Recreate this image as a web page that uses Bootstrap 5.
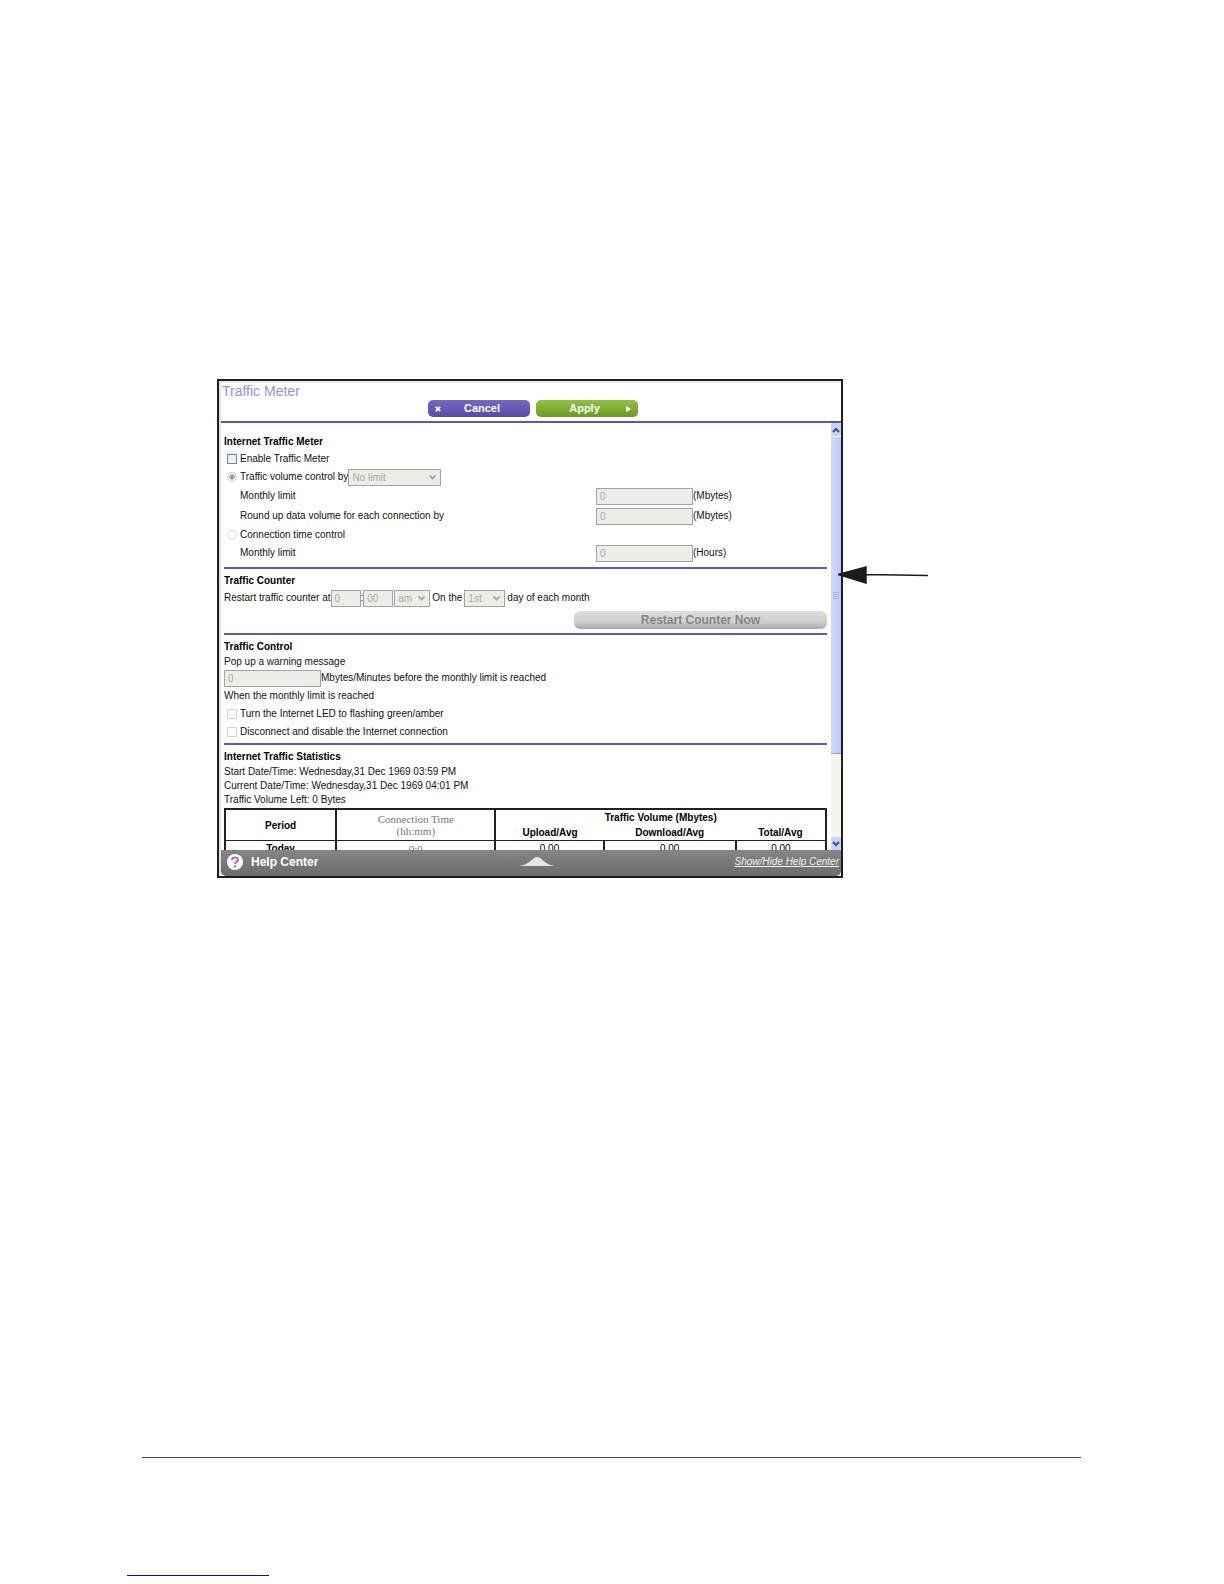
<!DOCTYPE html>
<html lang="en">
<head>
<meta charset="utf-8">
<meta name="viewport" content="width=device-width, initial-scale=1">
<title>Traffic Meter</title>
<link href="https://cdn.jsdelivr.net/npm/bootstrap@5.3.0/dist/css/bootstrap.min.css" rel="stylesheet">
<style>
body{font-family:"Liberation Sans",Arial,sans-serif;font-size:10px;line-height:14px;color:#111;background:#fff}
.page{min-height:1584px;padding-top:379px}
.shot{width:626px;max-width:80%;margin-left:217px}
.frame{border:2px solid #1d1d22}
.inner{border-left:2px solid #e2e2e6;border-top:2px solid #ececec}
.head{height:40px;border-bottom:2px solid #6153b4;padding:0 0 4px 1px}
.title{font-size:14px;line-height:16px;color:#9b8fe0;margin:0;font-weight:400}
.pill{width:102px;height:17px;border:0;border-radius:5px;color:#fff;font-size:11px;line-height:17px;font-weight:700;padding:0 7px}
.pill-cancel{background:linear-gradient(#7568c0,#5a4ba6)}
.pill-apply{background:linear-gradient(#93c146,#699a23)}
.pills{gap:6px;padding-left:3px}
.view{height:427px;overflow:hidden}
.pane{padding:11px 0 0 3px;min-width:0}
.sect{border-top:2px solid #6559b8;padding-top:4px}
.sect-first{padding-bottom:5px}
.sect-control{padding-bottom:2px}
.sect-title{font-size:10px;line-height:16px;font-weight:700;margin:0;color:#000}
.line{min-height:18px}
.line-tall{min-height:20px}
.indent{padding-left:16px}
.amount{width:231px}
.box,.drop{height:17px;border:1px solid #9aa5b1;background-color:#edede7;color:#a9a9a0;font-family:inherit;font-size:10px;line-height:15px;padding:0 3px;border-radius:0;opacity:1}
.box-wide{width:97px}
.box-short{width:30px}
.drop{appearance:none;background-image:url("data:image/svg+xml,%3Csvg xmlns='http://www.w3.org/2000/svg' width='9' height='7'%3E%3Cpath d='M1.500 1.500l3 3 3-3' fill='none' stroke='%23a9ada8' stroke-width='2'/%3E%3C/svg%3E");background-repeat:no-repeat;background-position:right 3px center}
.drop-limit{width:93px}
.drop-half{width:36px;margin:0 2px 0 1px}
.drop-day{width:41px;margin:0 2px}
.tick,.dot{appearance:none;width:10px;height:10px;margin:0 3px 0 3px;border:1px solid #d5d5cf;background:#fff;flex:none}
.tick-on{border-color:#6d8496;background:#eef1f1}
.dot{border-radius:50%}
.dot:checked{background:radial-gradient(circle,#9d9d98 0 2px,#f2f2ee 3px)}
.pill-restart{width:253px;height:18px;border:0;border-radius:6px;background:linear-gradient(#dedede,#cfcfcf 60%,#a9a9a9);color:#858585;font-size:12px;line-height:18px;font-weight:700;padding:0}
.stats{width:100%;table-layout:fixed;border:2px solid #222;border-collapse:collapse;margin-top:1px;text-align:center;color:#000}
.stats th,.stats td{border:1px solid #222;border-left-width:2px;padding:0;line-height:15px}
.stats .bl{border-width:0 0 1px 0}
.stats .left{border-width:0 0 0 2px}
.stats .leftb{border-width:0 0 1px 2px}
.stats .serif{font-family:"Liberation Serif",serif;font-size:11px;line-height:12px;font-weight:400;color:#777}
.bar{width:10px;background:#f4f4f0;flex:none}
.bar-btn{height:13px;background:#c6d3fb;flex:none;border-radius:2px}
.thumb{height:317px;margin-top:1px;background:linear-gradient(90deg,#cfdafd,#bccbfa);border-bottom:1px solid #8e9fd8}
.help{height:26px;background:linear-gradient(#858585,#6c6c6c);border-radius:0 0 5px 5px;color:#fff;padding:0 2px 2px 6px}
.help-name{font-size:12px;font-weight:700}
.help a{font-size:10px;font-style:italic;color:#f2f2f2}
.help-mid{left:51%;bottom:10px;transform:translateX(-50%)}
.pointer{left:calc(100% - 5px);top:187px}
.foot-rule{height:1px;background:#5a3a78;margin:0 143px 117px 142px}
.link-rule{height:1px;width:142px;background:#1b0a8c;margin:0 0 8px 127px}
</style>
</head>
<body>
<div class="page d-flex flex-column">
<main class="shot position-relative">
 <div class="frame"><div class="inner">
  <header class="head d-flex flex-column justify-content-between">
   <h1 class="title">Traffic Meter</h1>
   <div class="pills d-flex justify-content-center">
    <button type="button" class="pill pill-cancel d-flex align-items-center">
     <svg width="6" height="6" viewBox="0 0 6 6" aria-hidden="true"><path d="M.8.8l4.400 4.400M5.200.8L.8 5.200" stroke="#fff" stroke-width="1.800"/></svg><span class="flex-fill">Cancel</span></button>
    <button type="button" class="pill pill-apply d-flex align-items-center"><span class="flex-fill">Apply</span>
     <svg width="5" height="6" viewBox="0 0 5 6" aria-hidden="true"><path d="M0 0l5 3-5 3z" fill="#fff"/></svg></button>
   </div>
  </header>
  <div class="view d-flex">
   <form class="pane flex-fill">
    <section class="sect-first">
     <h2 class="sect-title">Internet Traffic Meter</h2>
     <div class="line d-flex align-items-center"><input class="tick tick-on" type="checkbox" id="enable"><label for="enable">Enable Traffic Meter</label></div>
     <div class="line d-flex align-items-center"><input class="dot" type="radio" name="mode" id="vol" checked disabled><label for="vol">Traffic volume control by</label><select class="drop drop-limit" id="limit" aria-label="Volume control" disabled><option>No limit</option></select></div>
     <div class="line-tall indent d-flex align-items-center justify-content-between"><label for="m1">Monthly limit</label><div class="amount d-flex align-items-center"><input class="box box-wide" id="m1" value="0" disabled><span>(Mbytes)</span></div></div>
     <div class="line-tall indent d-flex align-items-center justify-content-between"><label for="m2">Round up data volume for each connection by</label><div class="amount d-flex align-items-center"><input class="box box-wide" id="m2" value="0" disabled><span>(Mbytes)</span></div></div>
     <div class="line d-flex align-items-center"><input class="dot" type="radio" name="mode" id="time" disabled><label for="time">Connection time control</label></div>
     <div class="line indent d-flex align-items-center justify-content-between"><label for="m3">Monthly limit</label><div class="amount d-flex align-items-center"><input class="box box-wide" id="m3" value="0" disabled><span>(Hours)</span></div></div>
    </section>
    <section class="sect">
     <h2 class="sect-title">Traffic Counter</h2>
     <div class="line d-flex align-items-center"><label for="hh">Restart traffic counter at</label><input class="box box-short" id="hh" value="0" disabled><span>:</span><input class="box box-short" aria-label="Minutes" value="00" disabled><select class="drop drop-half" aria-label="am or pm" disabled><option>am</option></select><label for="day">On the</label><select class="drop drop-day" id="day" disabled><option>1st</option></select><span>day of each month</span></div>
     <div class="d-flex justify-content-end pt-1 pb-1"><button type="button" class="pill-restart" disabled>Restart Counter Now</button></div>
    </section>
    <section class="sect sect-control">
     <h2 class="sect-title">Traffic Control</h2>
     <div>Pop up a warning message</div>
     <div class="line d-flex align-items-center"><input class="box box-wide" id="warn" value="0" disabled><label for="warn">Mbytes/Minutes before the monthly limit is reached</label></div>
     <div class="line d-flex align-items-center">When the monthly limit is reached</div>
     <div class="line d-flex align-items-center"><input class="tick" type="checkbox" id="led" disabled><label for="led">Turn the Internet LED to flashing green/amber</label></div>
     <div class="line d-flex align-items-center"><input class="tick" type="checkbox" id="disc" disabled><label for="disc">Disconnect and disable the Internet connection</label></div>
    </section>
    <section class="sect">
     <h2 class="sect-title">Internet Traffic Statistics</h2>
     <div>Start Date/Time: Wednesday,31 Dec 1969 03:59 PM</div>
     <div>Current Date/Time: Wednesday,31 Dec 1969 04:01 PM</div>
     <div>Traffic Volume Left: 0 Bytes</div>
     <table class="stats">
      <colgroup><col style="width:18.500%"><col style="width:26.500%"><col style="width:18%"><col style="width:22%"><col style="width:15%"></colgroup>
      <thead>
       <tr><th rowspan="2">Period</th><th rowspan="2" class="serif">Connection Time<br>(hh:mm)</th><th colspan="3" class="left">Traffic Volume (Mbytes)</th></tr>
       <tr><th class="leftb">Upload/Avg</th><th class="bl">Download/Avg</th><th class="bl">Total/Avg</th></tr>
      </thead>
      <tbody><tr><th>Today</th><td class="serif">0:0</td><td>0.00</td><td>0.00</td><td>0.00</td></tr></tbody>
     </table>
    </section>
   </form>
   <div class="bar d-flex flex-column ms-1" aria-hidden="true">
    <div class="bar-btn d-flex align-items-center justify-content-center"><svg width="8" height="6" viewBox="0 0 8 6"><path d="M1 5l3-3 3 3" fill="none" stroke="#43557f" stroke-width="2"/></svg></div>
    <div class="thumb d-flex align-items-center justify-content-center"><svg width="6" height="7" viewBox="0 0 6 7"><path d="M0 .5h6M0 2.500h6M0 4.500h6M0 6.500h6" stroke="#a3b5ee"/></svg></div>
    <div class="bar-btn d-flex align-items-center justify-content-center mt-auto"><svg width="8" height="6" viewBox="0 0 8 6"><path d="M1 1l3 3 3-3" fill="none" stroke="#43557f" stroke-width="2"/></svg></div>
   </div>
  </div>
  <footer class="help d-flex align-items-center justify-content-between position-relative">
   <div class="d-flex align-items-center"><svg class="me-1" width="16" height="16" viewBox="0 0 16 16" aria-hidden="true"><circle cx="8" cy="8" r="8" fill="#fff"/><path d="M5 6C5 2.500 11 2.500 11 5.800 11 8 8 7.600 8 10.200" fill="none" stroke="#b455b8" stroke-width="1.800"/><circle cx="8" cy="12.400" r="1.100" fill="#b455b8"/></svg><span class="help-name ps-1">Help Center</span></div>
   <svg class="help-mid position-absolute" width="36" height="9" viewBox="0 0 36 9" aria-hidden="true"><path d="M0 9Q8 8 15 1q3-2 6 0 7 7 15 8z" fill="#e6e6e6"/></svg>
   <a href="#">Show/Hide Help Center</a>
  </footer>
 </div></div>
 <svg class="pointer position-absolute" width="90" height="18" viewBox="0 0 90 18" aria-hidden="true"><path d="M0 8.500L28 1v16zM28 8.500l62 1" fill="#1d1a1b" stroke="#1d1a1b" stroke-width="1.500"/></svg>
</main>
<div class="foot-rule mt-auto"></div>
<div class="link-rule"></div>
</div>
<script src="https://cdn.jsdelivr.net/npm/bootstrap@5.3.0/dist/js/bootstrap.bundle.min.js"></script>
</body>
</html>
